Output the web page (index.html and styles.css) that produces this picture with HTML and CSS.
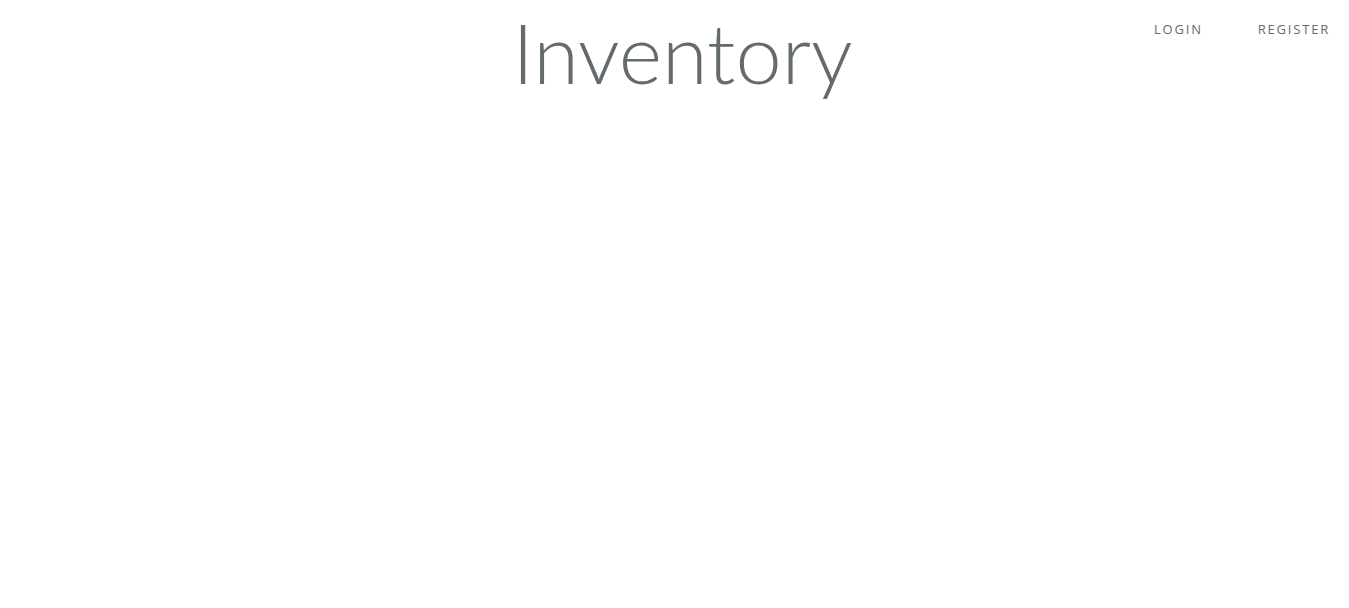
FILE: index.html
```html
<!DOCTYPE html>
<html lang="en">
<head>
<meta charset="utf-8">
<title>Inventory</title>
<link rel="stylesheet" href="styles.css">
</head>
<body>
<div class="page">
  <div class="side"></div>
  <div class="title">Inventory</div>
  <nav class="links">
    <a href="#" class="link">Login</a>
    <a href="#" class="link">Register</a>
  </nav>
</div>
</body>
</html>
```
FILE: styles.css
```css
html, body {
  margin: 0;
  background: #fff;
  color: #636b6f;
  height: 100%;
}
.page {
  display: grid;
  grid-template-columns: 1fr auto 1fr;
  align-items: start;
}
.title {
  font-family: "Lato", sans-serif;
  font-weight: 300;
  font-size: 83px;
  line-height: 100px;
  padding-left: 16px;
  margin-top: 2px;
}
.links {
  display: flex;
  justify-content: flex-end;
  gap: 55px;
  padding-top: 21px;
  padding-right: 19px;
}
.link {
  font-family: "Open Sans", sans-serif;
  font-size: 13px;
  font-weight: 500;
  letter-spacing: 1.8px;
  text-transform: uppercase;
  color: #636b6f;
  text-decoration: none;
  line-height: 16px;
}
```
